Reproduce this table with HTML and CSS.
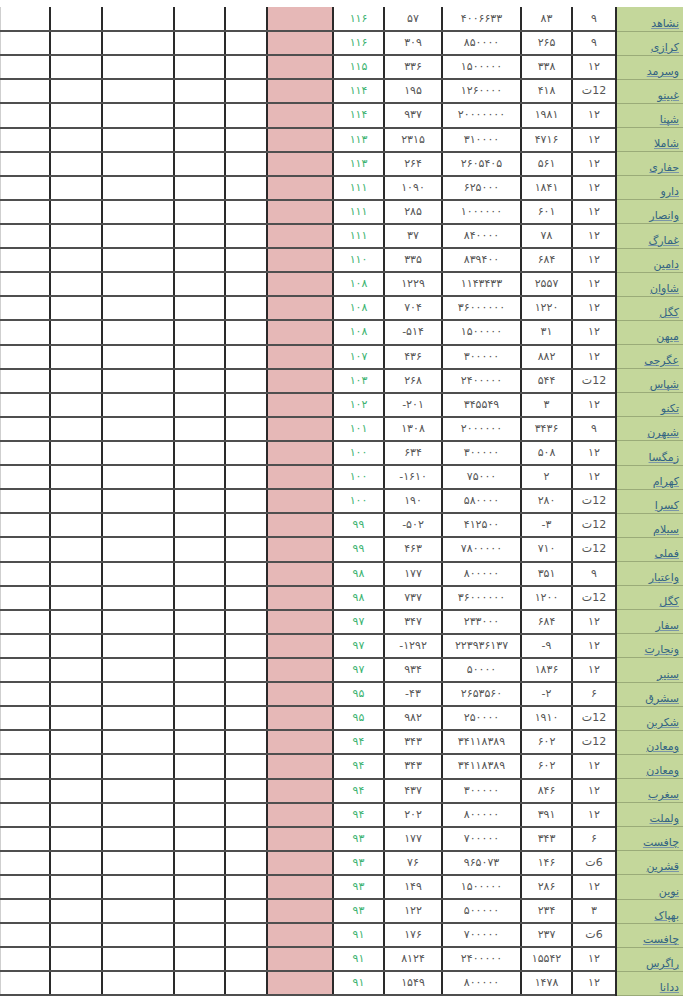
FILE: index.html
```html
<!DOCTYPE html>
<html lang="fa" dir="rtl">
<head>
<meta charset="utf-8">
<title>جدول</title>
<link rel="stylesheet" href="styles.css">
</head>
<body>
<table class="sheet">
<colgroup>
<col class="w-name"><col class="w-c2"><col class="w-c3"><col class="w-c4"><col class="w-c5"><col class="w-c6"><col class="w-pink"><col class="w-c8"><col class="w-c9"><col class="w-c10"><col class="w-c11"><col class="w-c12">
</colgroup>
<tbody>
<tr><td class="n"><span>نشاهد</span></td><td>۹</td><td>۸۳</td><td>۴۰۰۶۶۳۳</td><td>۵۷</td><td class="g">۱۱۶</td><td class="p"></td><td></td><td></td><td></td><td></td><td class="last"></td></tr>
<tr><td class="n"><span>کرازی</span></td><td>۹</td><td>۲۶۵</td><td>۸۵۰۰۰۰</td><td>۳۰۹</td><td class="g">۱۱۶</td><td class="p"></td><td></td><td></td><td></td><td></td><td class="last"></td></tr>
<tr><td class="n"><span>وسرمد</span></td><td>۱۲</td><td>۳۳۸</td><td>۱۵۰۰۰۰۰</td><td>۳۳۶</td><td class="g">۱۱۵</td><td class="p"></td><td></td><td></td><td></td><td></td><td class="last"></td></tr>
<tr><td class="n"><span>غبینو</span></td><td class="t">12ت</td><td>۴۱۸</td><td>۱۲۶۰۰۰۰</td><td>۱۹۵</td><td class="g">۱۱۴</td><td class="p"></td><td></td><td></td><td></td><td></td><td class="last"></td></tr>
<tr><td class="n"><span>شپنا</span></td><td>۱۲</td><td>۱۹۸۱</td><td>۲۰۰۰۰۰۰۰</td><td>۹۳۷</td><td class="g">۱۱۴</td><td class="p"></td><td></td><td></td><td></td><td></td><td class="last"></td></tr>
<tr><td class="n"><span>شاملا</span></td><td>۱۲</td><td>۴۷۱۶</td><td>۳۱۰۰۰۰</td><td>۲۳۱۵</td><td class="g">۱۱۳</td><td class="p"></td><td></td><td></td><td></td><td></td><td class="last"></td></tr>
<tr><td class="n"><span>حفاری</span></td><td>۱۲</td><td>۵۶۱</td><td>۲۶۰۵۴۰۵</td><td>۲۶۴</td><td class="g">۱۱۳</td><td class="p"></td><td></td><td></td><td></td><td></td><td class="last"></td></tr>
<tr><td class="n"><span>دارو</span></td><td>۱۲</td><td>۱۸۴۱</td><td>۶۲۵۰۰۰</td><td>۱۰۹۰</td><td class="g">۱۱۱</td><td class="p"></td><td></td><td></td><td></td><td></td><td class="last"></td></tr>
<tr><td class="n"><span>وانصار</span></td><td>۱۲</td><td>۶۰۱</td><td>۱۰۰۰۰۰۰</td><td>۲۸۵</td><td class="g">۱۱۱</td><td class="p"></td><td></td><td></td><td></td><td></td><td class="last"></td></tr>
<tr><td class="n"><span>غمارگ</span></td><td>۱۲</td><td>۷۸</td><td>۸۴۰۰۰۰</td><td>۳۷</td><td class="g">۱۱۱</td><td class="p"></td><td></td><td></td><td></td><td></td><td class="last"></td></tr>
<tr><td class="n"><span>دامین</span></td><td>۱۲</td><td>۶۸۴</td><td>۸۳۹۴۰۰</td><td>۳۳۵</td><td class="g">۱۱۰</td><td class="p"></td><td></td><td></td><td></td><td></td><td class="last"></td></tr>
<tr><td class="n"><span>شاوان</span></td><td>۱۲</td><td>۲۵۵۷</td><td>۱۱۴۳۴۳۳</td><td>۱۲۲۹</td><td class="g">۱۰۸</td><td class="p"></td><td></td><td></td><td></td><td></td><td class="last"></td></tr>
<tr><td class="n"><span>کگل</span></td><td>۱۲</td><td>۱۲۲۰</td><td>۳۶۰۰۰۰۰۰</td><td>۷۰۴</td><td class="g">۱۰۸</td><td class="p"></td><td></td><td></td><td></td><td></td><td class="last"></td></tr>
<tr><td class="n"><span>میهن</span></td><td>۱۲</td><td>۳۱</td><td>۱۵۰۰۰۰۰</td><td>-۵۱۴</td><td class="g">۱۰۸</td><td class="p"></td><td></td><td></td><td></td><td></td><td class="last"></td></tr>
<tr><td class="n"><span>عگرجی</span></td><td>۱۲</td><td>۸۸۲</td><td>۳۰۰۰۰۰</td><td>۴۳۶</td><td class="g">۱۰۷</td><td class="p"></td><td></td><td></td><td></td><td></td><td class="last"></td></tr>
<tr><td class="n"><span>شپاس</span></td><td class="t">12ت</td><td>۵۴۴</td><td>۲۴۰۰۰۰۰</td><td>۲۶۸</td><td class="g">۱۰۳</td><td class="p"></td><td></td><td></td><td></td><td></td><td class="last"></td></tr>
<tr><td class="n"><span>تکنو</span></td><td>۱۲</td><td>۳</td><td>۳۴۵۵۴۹</td><td>-۲۰۱</td><td class="g">۱۰۲</td><td class="p"></td><td></td><td></td><td></td><td></td><td class="last"></td></tr>
<tr><td class="n"><span>شبهرن</span></td><td>۹</td><td>۳۴۳۶</td><td>۲۰۰۰۰۰۰</td><td>۱۳۰۸</td><td class="g">۱۰۱</td><td class="p"></td><td></td><td></td><td></td><td></td><td class="last"></td></tr>
<tr><td class="n"><span>زمگسا</span></td><td>۱۲</td><td>۵۰۸</td><td>۳۰۰۰۰۰</td><td>۶۳۴</td><td class="g">۱۰۰</td><td class="p"></td><td></td><td></td><td></td><td></td><td class="last"></td></tr>
<tr><td class="n"><span>کهرام</span></td><td>۱۲</td><td>۲</td><td>۷۵۰۰۰</td><td>-۱۶۱۰</td><td class="g">۱۰۰</td><td class="p"></td><td></td><td></td><td></td><td></td><td class="last"></td></tr>
<tr><td class="n"><span>کسرا</span></td><td class="t">12ت</td><td>۲۸۰</td><td>۵۸۰۰۰۰</td><td>۱۹۰</td><td class="g">۱۰۰</td><td class="p"></td><td></td><td></td><td></td><td></td><td class="last"></td></tr>
<tr><td class="n"><span>سیلام</span></td><td class="t">12ت</td><td>-۳</td><td>۴۱۲۵۰۰</td><td>-۵۰۲</td><td class="g">۹۹</td><td class="p"></td><td></td><td></td><td></td><td></td><td class="last"></td></tr>
<tr><td class="n"><span>فملی</span></td><td class="t">12ت</td><td>۷۱۰</td><td>۷۸۰۰۰۰۰</td><td>۴۶۳</td><td class="g">۹۹</td><td class="p"></td><td></td><td></td><td></td><td></td><td class="last"></td></tr>
<tr><td class="n"><span>واعتبار</span></td><td>۹</td><td>۳۵۱</td><td>۸۰۰۰۰۰</td><td>۱۷۷</td><td class="g">۹۸</td><td class="p"></td><td></td><td></td><td></td><td></td><td class="last"></td></tr>
<tr><td class="n"><span>کگل</span></td><td class="t">12ت</td><td>۱۲۰۰</td><td>۳۶۰۰۰۰۰۰</td><td>۷۳۷</td><td class="g">۹۸</td><td class="p"></td><td></td><td></td><td></td><td></td><td class="last"></td></tr>
<tr><td class="n"><span>سفار</span></td><td>۱۲</td><td>۶۸۴</td><td>۲۳۳۰۰۰</td><td>۳۴۷</td><td class="g">۹۷</td><td class="p"></td><td></td><td></td><td></td><td></td><td class="last"></td></tr>
<tr><td class="n"><span>ونجارت</span></td><td>۱۲</td><td>-۹</td><td>۲۲۳۹۳۶۱۳۷</td><td>-۱۲۹۲</td><td class="g">۹۷</td><td class="p"></td><td></td><td></td><td></td><td></td><td class="last"></td></tr>
<tr><td class="n"><span>سنیر</span></td><td>۱۲</td><td>۱۸۳۶</td><td>۵۰۰۰۰</td><td>۹۳۴</td><td class="g">۹۷</td><td class="p"></td><td></td><td></td><td></td><td></td><td class="last"></td></tr>
<tr><td class="n"><span>سشرق</span></td><td>۶</td><td>-۲</td><td>۲۶۵۳۵۶۰</td><td>-۴۳</td><td class="g">۹۵</td><td class="p"></td><td></td><td></td><td></td><td></td><td class="last"></td></tr>
<tr><td class="n"><span>شکربن</span></td><td class="t">12ت</td><td>۱۹۱۰</td><td>۲۵۰۰۰۰</td><td>۹۸۲</td><td class="g">۹۵</td><td class="p"></td><td></td><td></td><td></td><td></td><td class="last"></td></tr>
<tr><td class="n"><span>ومعادن</span></td><td class="t">12ت</td><td>۶۰۲</td><td>۳۴۱۱۸۳۸۹</td><td>۳۴۳</td><td class="g">۹۴</td><td class="p"></td><td></td><td></td><td></td><td></td><td class="last"></td></tr>
<tr><td class="n"><span>ومعادن</span></td><td>۱۲</td><td>۶۰۲</td><td>۳۴۱۱۸۳۸۹</td><td>۳۴۳</td><td class="g">۹۴</td><td class="p"></td><td></td><td></td><td></td><td></td><td class="last"></td></tr>
<tr><td class="n"><span>سغرب</span></td><td>۱۲</td><td>۸۴۶</td><td>۳۰۰۰۰۰</td><td>۴۳۷</td><td class="g">۹۴</td><td class="p"></td><td></td><td></td><td></td><td></td><td class="last"></td></tr>
<tr><td class="n"><span>ولملت</span></td><td>۱۲</td><td>۳۹۱</td><td>۸۰۰۰۰۰</td><td>۲۰۲</td><td class="g">۹۴</td><td class="p"></td><td></td><td></td><td></td><td></td><td class="last"></td></tr>
<tr><td class="n"><span>چافست</span></td><td>۶</td><td>۳۴۳</td><td>۷۰۰۰۰۰</td><td>۱۷۷</td><td class="g">۹۳</td><td class="p"></td><td></td><td></td><td></td><td></td><td class="last"></td></tr>
<tr><td class="n"><span>قشرین</span></td><td class="t">6ت</td><td>۱۴۶</td><td>۹۶۵۰۷۳</td><td>۷۶</td><td class="g">۹۳</td><td class="p"></td><td></td><td></td><td></td><td></td><td class="last"></td></tr>
<tr><td class="n"><span>نوین</span></td><td>۱۲</td><td>۲۸۶</td><td>۱۵۰۰۰۰۰</td><td>۱۴۹</td><td class="g">۹۳</td><td class="p"></td><td></td><td></td><td></td><td></td><td class="last"></td></tr>
<tr><td class="n"><span>بهپاک</span></td><td>۳</td><td>۲۳۴</td><td>۵۰۰۰۰۰</td><td>۱۲۲</td><td class="g">۹۳</td><td class="p"></td><td></td><td></td><td></td><td></td><td class="last"></td></tr>
<tr><td class="n"><span>چافست</span></td><td class="t">6ت</td><td>۲۳۷</td><td>۷۰۰۰۰۰</td><td>۱۷۶</td><td class="g">۹۱</td><td class="p"></td><td></td><td></td><td></td><td></td><td class="last"></td></tr>
<tr><td class="n"><span>راگرس</span></td><td>۱۲</td><td>۱۵۵۴۲</td><td>۲۴۰۰۰۰۰</td><td>۸۱۲۴</td><td class="g">۹۱</td><td class="p"></td><td></td><td></td><td></td><td></td><td class="last"></td></tr>
<tr><td class="n"><span>ددانا</span></td><td>۱۲</td><td>۱۴۷۸</td><td>۸۰۰۰۰۰</td><td>۱۵۴۹</td><td class="g">۹۱</td><td class="p"></td><td></td><td></td><td></td><td></td><td class="last"></td></tr>
</tbody>
</table>
</body>
</html>
```
FILE: styles.css
```css
html, body {
  margin: 0;
  padding: 0;
  background: #ffffff;
}
body {
  padding: 7px 3px 0 0;
  font-family: "DejaVu Sans", sans-serif;
}
.sheet {
  direction: rtl;
  table-layout: fixed;
  border-collapse: collapse;
  width: 683px;
  font-size: 11px;
  color: #555555;
}
.w-name { width: 67px; }
.w-c2 { width: 44px; }
.w-c3 { width: 51px; }
.w-c4 { width: 79px; }
.w-c5 { width: 58px; }
.w-c6 { width: 51px; }
.w-pink { width: 66px; }
.w-c8 { width: 42px; }
.w-c9 { width: 51px; }
.w-c10 { width: 72px; }
.w-c11 { width: 52px; }
.w-c12 { width: 50px; }
.sheet tr { height: 24.12px; }
.sheet td {
  direction: ltr;
  padding: 0 2px;
  text-align: center;
  vertical-align: middle;
  border-bottom: 2px solid #4f4f4f;
  border-left: 2px solid #2a2a2a;
  white-space: nowrap;
  overflow: hidden;
  line-height: 14px;
}
.sheet td.t { direction: rtl; }
.sheet td.n {
  direction: rtl;
  background: #c4d79b;
  text-align: right;
  vertical-align: bottom;
  padding: 0 4px 0 2px;
  border-bottom: 1px solid #9aab78;
}
.sheet td.n span {
  color: #336482;
  text-decoration: underline;
  text-decoration-color: #7b96a8;
  font-size: 11px;
  line-height: 13px;
}
.sheet td.g { color: #3cb371; }
.sheet td.p { background: #e6b8b7; }
.sheet td.last { border-left: 1px solid #cfcfcf; }
```
